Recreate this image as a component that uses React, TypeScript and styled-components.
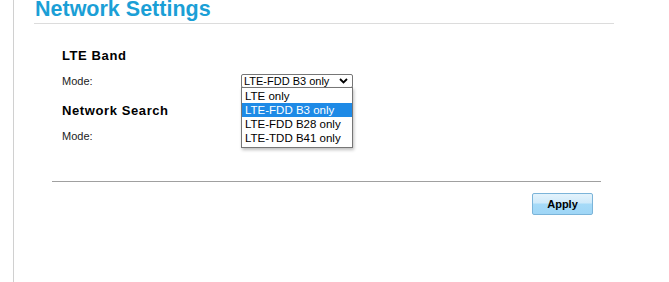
import styled, { createGlobalStyle } from "styled-components";

const GlobalStyle = createGlobalStyle`
  html, body {
    margin: 0;
    padding: 0;
    background: #ffffff;
  }
  body {
    font-family: "Liberation Sans", Arial, sans-serif;
    color: #000;
  }
`;

const Frame = styled.div`
  margin-left: 13px;
  height: 282px;
  border-left: 1px solid #d0d0d0;
  padding-left: 20px;
  box-sizing: border-box;
  overflow: hidden;
`;

const Header = styled.div`
  width: 580px;
  height: 23px;
  border-bottom: 1px solid #dcdcdc;
  overflow: hidden;
`;

const Title = styled.h1`
  margin: -4px 0 0 1px;
  font-size: 21.5px;
  line-height: 26px;
  font-weight: bold;
  color: #1b9fd6;
`;

const Body = styled.div`
  padding: 24px 0 0 28px;
`;

const Section = styled.div`
  display: flex;
  flex-direction: column;
  gap: 10px;
  margin-bottom: 15px;
`;

const Heading = styled.h2`
  margin: 0;
  font-size: 13px;
  line-height: 16px;
  font-weight: bold;
  letter-spacing: 0.6px;
`;

const Row = styled.div`
  display: flex;
  align-items: center;
  height: 14px;
`;

const Label = styled.span`
  width: 179px;
  font-size: 11px;
  color: #222;
`;

const SelectWrap = styled.div`
  position: relative;
  width: 112px;
`;

const SelectBox = styled.div`
  box-sizing: border-box;
  height: 14px;
  border: 1px solid #767676;
  border-radius: 2px;
  display: flex;
  align-items: center;
  justify-content: space-between;
  padding: 0 4px 0 2px;
  font-size: 11px;
  line-height: 12px;
  background: #fff;
`;

const List = styled.ul`
  position: absolute;
  top: 13px;
  left: 0;
  width: 112px;
  box-sizing: border-box;
  margin: 0;
  padding: 1px 0 2px;
  list-style: none;
  background: #fff;
  border: 1px solid #767676;
  box-shadow: 1px 2px 3px rgba(0, 0, 0, 0.25);
  z-index: 2;
`;

const Option = styled.li<{ $active?: boolean }>`
  height: 14px;
  line-height: 14px;
  padding: 0 3px;
  font-size: 11.5px;
  background: ${(p) => (p.$active ? "#1e8ae6" : "transparent")};
  color: ${(p) => (p.$active ? "#fff" : "#000")};
  white-space: nowrap;
`;

const Rule = styled.hr`
  margin: 38px 0 0 18px;
  width: 549px;
  border: none;
  border-top: 1px solid #a0a0a0;
`;

const Actions = styled.div`
  width: 559px;
  display: flex;
  justify-content: flex-end;
  padding-top: 11px;
`;

const ApplyButton = styled.button`
  width: 61px;
  height: 22px;
  border: 1px solid #7bb4d9;
  border-radius: 2px;
  font-family: "Liberation Sans", Arial, sans-serif;
  font-size: 11px;
  font-weight: bold;
  color: #000;
  background: linear-gradient(#e4f3fc 0%, #cfeafa 45%, #a6dbf8 50%, #9fd6f6 100%);
  padding: 0;
`;

const Chevron = () => (
  <svg width="9" height="6" viewBox="0 0 9 6">
    <path d="M1 1 L4.5 4.5 L8 1" fill="none" stroke="#000" strokeWidth="1.8" />
  </svg>
);

const bands = ["LTE only", "LTE-FDD B3 only", "LTE-FDD B28 only", "LTE-TDD B41 only"];

export default function App() {
  return (
    <>
      <GlobalStyle />
      <Frame>
        <Header>
          <Title>Network Settings</Title>
        </Header>
        <Body>
          <Section>
            <Heading>LTE Band</Heading>
            <Row>
              <Label>Mode:</Label>
              <SelectWrap>
                <SelectBox>
                  <span>LTE-FDD B3 only</span>
                  <Chevron />
                </SelectBox>
                <List>
                  {bands.map((b) => (
                    <Option key={b} $active={b === "LTE-FDD B3 only"}>
                      {b}
                    </Option>
                  ))}
                </List>
              </SelectWrap>
            </Row>
          </Section>
          <Section>
            <Heading>Network Search</Heading>
            <Row>
              <Label>Mode:</Label>
            </Row>
          </Section>
        </Body>
        <Rule />
        <Actions>
          <ApplyButton>Apply</ApplyButton>
        </Actions>
      </Frame>
    </>
  );
}
